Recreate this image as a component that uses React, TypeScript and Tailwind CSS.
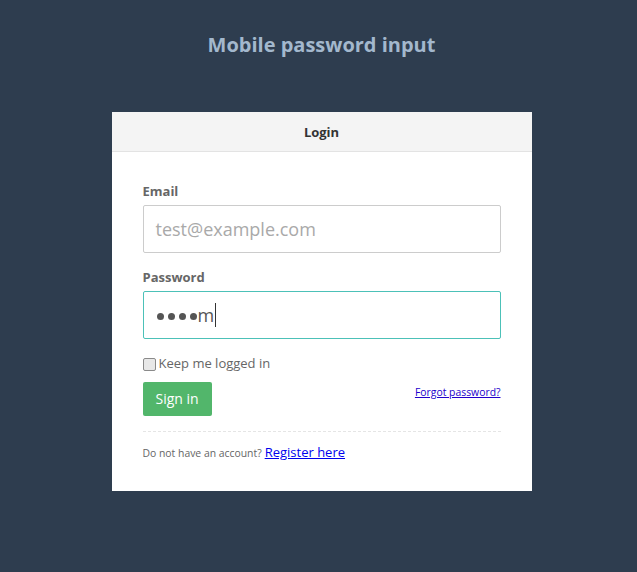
export default function App() {
  return (
    <div
      className="min-h-[572px] w-full bg-[#2e3d4f] flex flex-col items-center pl-[6px]"
      style={{ fontFamily: '"Open Sans", sans-serif' }}
    >
      <h1 className="pt-[31px] text-[20px] leading-[28px] font-bold text-[#a3b8cd]">
        Mobile password input
      </h1>
      <div className="mt-[53px] w-[420px] bg-white">
        <div className="h-[40px] bg-[#f4f4f4] border-b border-[#e3e3e3] flex items-center justify-center text-[13px] font-bold text-[#333] pt-[2px]">
          Login
        </div>
        <div className="px-[31px] pt-[30px] pb-[29px]">
          <div className="text-[13px] leading-[18px] font-bold text-[#666]">Email</div>
          <div className="mt-[5px] h-[48px] border border-[#ccc] rounded-[2px] flex items-center px-[12px] text-[18px] text-[#a9a9a9]">
            test@example.com
          </div>
          <div className="mt-[15px] text-[13px] leading-[18px] font-bold text-[#666]">Password</div>
          <div className="mt-[5px] h-[48px] border border-[#4cc1b8] rounded-[2px] flex items-center px-[13px] text-[18px] text-[#555]">
            <span className="flex items-center gap-[4px] mt-[3px]">
              <span className="block w-[7px] h-[7px] rounded-full bg-[#555]"></span>
              <span className="block w-[7px] h-[7px] rounded-full bg-[#555]"></span>
              <span className="block w-[7px] h-[7px] rounded-full bg-[#555]"></span>
              <span className="block w-[7px] h-[7px] rounded-full bg-[#555]"></span>
            </span>
            <span className="ml-[1px]">m</span>
            <span className="ml-[1px] inline-block w-px h-[24px] bg-[#333]"></span>
          </div>
          <div className="mt-[15px] h-[20px] flex items-center text-[13px] text-[#666]">
            <span className="inline-block w-[13px] h-[13px] border border-[#8a8a8a] bg-[#e8e8e8] rounded-[2px] mr-[3px]"></span>
            Keep me logged in
          </div>
          <div className="mt-[8px] flex items-start justify-between">
            <button className="h-[34px] px-[13px] pb-[2px] bg-[#52b66b] rounded-[2px] text-white text-[14px]">
              Sign in
            </button>
            <a href="#" className="mt-[3px] text-[10.4px] underline" style={{ color: "#2200cc" }}>
              Forgot password?
            </a>
          </div>
          <div className="mt-[15px] border-t border-dashed border-[#e5e5e5]"></div>
          <div className="mt-[11px] flex items-baseline text-[10.4px] text-[#666] leading-[18px]">
            Do not have an account?
            <a href="#" className="ml-[3px] text-[13px] underline" style={{ color: "#0000ee" }}>
              Register here
            </a>
          </div>
        </div>
      </div>
    </div>
  );
}
